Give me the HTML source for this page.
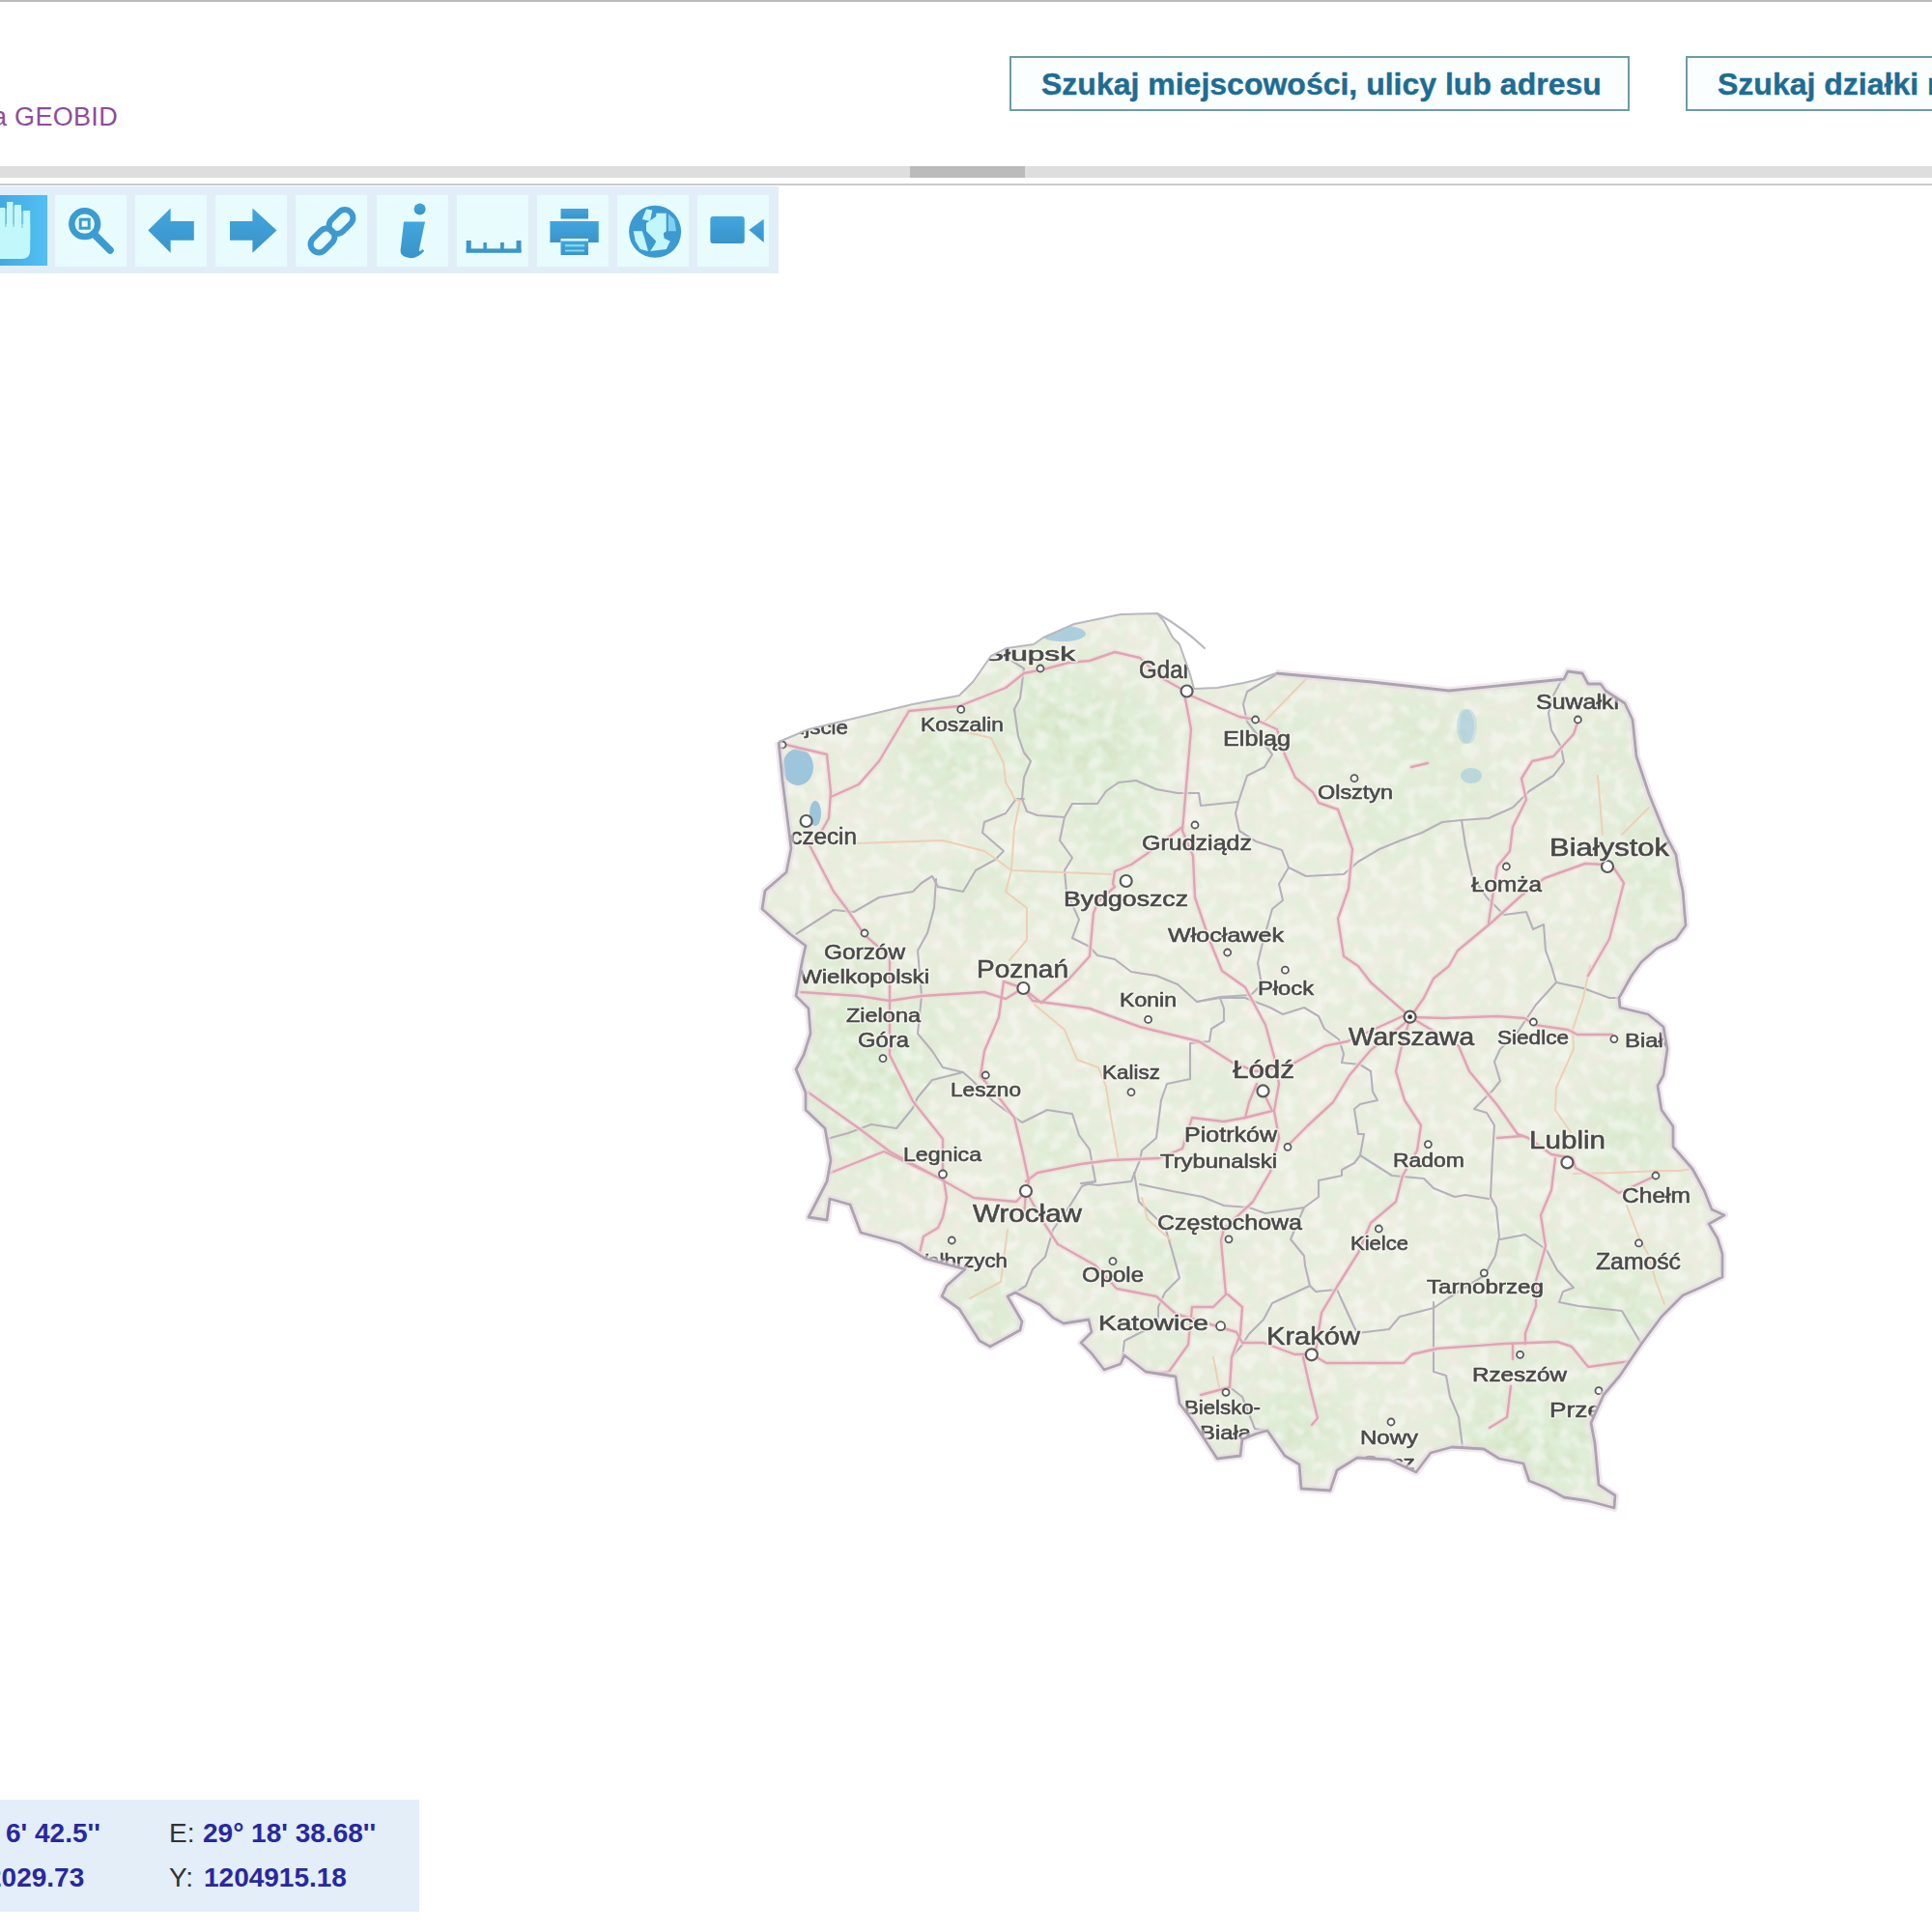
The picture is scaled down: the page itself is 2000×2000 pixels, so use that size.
<!DOCTYPE html>
<html><head><meta charset="utf-8">
<style>
html,body{margin:0;padding:0;background:#fff;width:2000px;height:2000px;overflow:hidden;position:relative;font-family:"Liberation Sans",sans-serif;}
.abs{position:absolute;}
#topline{left:0;top:0;width:2000px;height:2px;background:#bababa;}
#geobid{left:-8px;top:106px;font-size:27px;letter-spacing:0.3px;color:#8b4d9b;white-space:nowrap;}
#track{left:0;top:172px;width:2000px;height:12px;background:#dedede;}
#thumb{left:942px;top:172px;width:119px;height:12px;background:#bbbbbb;}
#sep{left:0;top:190px;width:2000px;height:2px;background:#cbcbcb;}
#toolbar{left:0;top:193px;width:806px;height:90px;background:#e1eef8;}
.btn{position:absolute;top:202px;width:74px;height:74px;background:#e6fbfd;}
.btn svg{position:absolute;left:0;top:0;}
.sbtn{position:absolute;top:58px;height:53px;border:2px solid #6b9ca8;background:#fbfefe;color:#1e6c93;font-weight:bold;font-size:32px;-webkit-text-stroke:0.4px #1e6c93;white-space:nowrap;overflow:hidden;}
.sbtn span{position:absolute;top:9px;}
#coords{left:0;top:1863px;width:434px;height:116px;background:#e3eef8;}
.cl{position:absolute;font-size:28px;color:#333;white-space:nowrap;}
.cv{position:absolute;font-size:28px;color:#2828a0;font-weight:bold;white-space:nowrap;}
</style></head>
<body>
<div id="topline" class="abs"></div>
<div id="geobid" class="abs">a GEOBID</div>
<div class="sbtn" style="left:1045px;width:638px;"><span style="left:31px;">Szukaj miejscowości, ulicy lub adresu</span></div>
<div class="sbtn" style="left:1745px;width:400px;"><span style="left:31px;">Szukaj działki nr</span></div>
<div id="track" class="abs"></div>
<div id="thumb" class="abs"></div>
<div id="sep" class="abs"></div>
<div id="toolbar" class="abs"></div>
<svg class="abs" style="left:0;top:0;" width="820" height="300" viewBox="0 0 820 300">
<defs>
<linearGradient id="hg" x1="0" y1="0" x2="1" y2="0"><stop offset="0" stop-color="#3a9fd6"/><stop offset="1" stop-color="#52bff2"/></linearGradient>
<linearGradient id="ig" x1="0" y1="0" x2="0" y2="1"><stop offset="0" stop-color="#42a6de"/><stop offset="1" stop-color="#3a93c8"/></linearGradient>
</defs>
<g fill="#e8fbfd">
<rect x="57" y="202" width="74" height="74"/>
<rect x="140" y="202" width="74" height="74"/>
<rect x="223" y="202" width="74" height="74"/>
<rect x="306" y="202" width="74" height="74"/>
<rect x="390" y="202" width="74" height="74"/>
<rect x="473" y="202" width="74" height="74"/>
<rect x="556" y="202" width="74" height="74"/>
<rect x="639" y="202" width="74" height="74"/>
<rect x="722" y="202" width="74" height="74"/>
</g>
<!-- hand -->
<rect x="-26" y="202" width="75" height="73" fill="url(#hg)"/>
<g fill="#c2f8fb">
<rect x="-2" y="215" width="7" height="30"/>
<rect x="7" y="209" width="6.5" height="30"/>
<rect x="15" y="212" width="7" height="30"/>
<rect x="24.2" y="218" width="7" height="30"/>
<path d="M-2 232 H31.2 V259 Q31.2 268 22 268 H-2 Z"/>
</g>
<g stroke="#8fd0dc" stroke-width="1.5"><line x1="5.8" y1="216" x2="5.8" y2="235"/><line x1="14" y1="213" x2="14" y2="235"/><line x1="23" y1="219" x2="23" y2="236"/></g>
<!-- magnifier -->
<g fill="none" stroke="#3b9ccf">
<circle cx="87.7" cy="231.7" r="13.4" stroke-width="6.5"/>
<rect x="83.2" y="227.2" width="9" height="9" stroke-width="3"/>
<line x1="97" y1="242" x2="114" y2="259" stroke-width="7.5" stroke-linecap="round"/>
</g>
<!-- arrows -->
<path fill="url(#ig)" d="M153.3 238.4 L176.6 215.6 V229 H200.8 V248.7 H176.6 V261.7 Z"/>
<path fill="url(#ig)" d="M286.5 238.4 L261.4 215.6 V229 H238 V248.7 H261.4 V261.7 Z"/>
<!-- link -->
<g fill="none" stroke="#3d9ad0" stroke-width="6">
<rect x="-14" y="-8.5" width="28" height="17" rx="8.5" transform="translate(353 229.5) rotate(-45)"/>
<rect x="-14" y="-8.5" width="28" height="17" rx="8.5" transform="translate(334 249) rotate(-45)"/>
</g>
<!-- info -->
<g fill="url(#ig)">
<circle cx="434.6" cy="216.4" r="6"/>
<path d="M418 229.5 H440 L434 258 Q433 262 438 258 L439 260 Q430 270 420 266 Q413 264 415 256 Z"/>
</g>
<!-- ruler -->
<g fill="#3c96c8">
<rect x="482.7" y="257.4" width="56.8" height="4.4"/>
<rect x="482.7" y="249" width="5" height="12"/>
<rect x="500.4" y="251" width="3.4" height="10"/>
<rect x="518" y="251" width="3.8" height="10"/>
<rect x="534.5" y="249" width="5" height="12"/>
</g>
<!-- printer -->
<g fill="url(#ig)">
<rect x="580.5" y="216" width="28.5" height="10.5"/>
<path d="M569.4 229 H619.7 V251 H609 V247 H580.5 V251 H569.4 Z"/>
<path d="M580.5 249.5 H609 V264 H580.5 Z"/>
</g>
<g fill="#7fd8f0"><rect x="585" y="253" width="20" height="2.4"/><rect x="585" y="258.5" width="20" height="2"/></g>
<!-- globe -->
<circle cx="678.1" cy="239.8" r="27" fill="#3d9ad0"/>
<g fill="#c2f6fb">
<path d="M679.3 220.7 L689.7 220.7 L689.7 239.3 L686.8 241.4 L687.6 246.8 L693.8 249.7 L689.7 258 L673.1 260 L677.3 253.8 L679.3 249.7 L675.2 245.5 L669 239.3 L669 231 L675.2 226.9 L679.3 224 Z"/>
<path d="M655.7 239.3 L664.8 239.3 L666.9 245.5 L671 260 L662.8 258 L657.8 249.7 Z"/>
<path d="M669 216.6 L675.2 217.4 L673.1 229 L664.8 226.9 Z"/>
</g>
<path d="M691.8 221.5 L698 226.9 L700 239.3 L691.8 239.3 Z" fill="#7fd0f0"/>
<!-- video -->
<rect x="735.3" y="223.9" width="35.4" height="28" rx="3" fill="url(#ig)"/>
<path d="M775.3 237.9 L790.7 226.7 V250.9 Z" fill="url(#ig)"/>
</svg>

<!-- MAP -->
<svg class="abs" style="left:0;top:0;" width="2000" height="2000" viewBox="0 0 2000 2000">
<defs><clipPath id="pl"><polygon points="806,768 837,755 891,742 945,729 993,720 1007,706 1026,679 1042,671 1070,667 1080,660 1112,646 1160,636 1198,635 1205,643 1214,660 1221,667 1232,698 1236,713 1260,712 1287,707 1300,704 1321,697 1420,706 1500,715 1570,708 1619,703 1623,695 1638,697 1644,708 1657,708 1662,715 1682,728 1690,745 1694,783 1707,822 1724,864 1735,885 1738,905 1742,922 1745,958 1735,972 1715,982 1699,996 1689,1010 1676,1033 1677,1043 1706,1050 1722,1063 1726,1086 1722,1113 1716,1124 1720,1149 1732,1166 1732,1187 1752,1210 1764,1232 1772,1252 1785,1258 1769,1267 1778,1282 1783,1298 1783,1322 1760,1333 1742,1341 1720,1363 1700,1390 1677,1424 1660,1444 1647,1473 1651,1494 1655,1537 1672,1548 1671,1561 1645,1554 1619,1550 1603,1541 1583,1533 1577,1515 1552,1510 1536,1500 1503,1498 1481,1504 1466,1524 1438,1511 1405,1509 1384,1522 1377,1543 1347,1541 1345,1516 1330,1507 1312,1481 1301,1484 1286,1490 1284,1507 1260,1510 1243,1484 1234,1470 1221,1453 1217,1425 1186,1420 1164,1403 1160,1412 1143,1418 1130,1401 1119,1390 1130,1379 1127,1366 1101,1370 1090,1364 1077,1351 1051,1338 1043,1342 1058,1368 1056,1377 1025,1394 1014,1388 993,1355 975,1342 980,1331 999,1314 958,1303 932,1287 891,1276 880,1247 859,1241 856,1263 837,1260 856,1223 860,1201 854,1168 834,1149 834,1131 824,1107 832,1092 839,1070 837,1044 824,1031 830,997 834,979 818,967 789,941 792,922 814,903 819,878 817,862 810,808"/></clipPath>
<filter id="bl" x="-20%" y="-20%" width="140%" height="140%"><feGaussianBlur stdDeviation="25"/></filter>
<filter id="b1"><feGaussianBlur stdDeviation="0.7"/></filter>
</defs>
<polygon points="806,768 837,755 891,742 945,729 993,720 1007,706 1026,679 1042,671 1070,667 1080,660 1112,646 1160,636 1198,635 1205,643 1214,660 1221,667 1232,698 1236,713 1260,712 1287,707 1300,704 1321,697 1420,706 1500,715 1570,708 1619,703 1623,695 1638,697 1644,708 1657,708 1662,715 1682,728 1690,745 1694,783 1707,822 1724,864 1735,885 1738,905 1742,922 1745,958 1735,972 1715,982 1699,996 1689,1010 1676,1033 1677,1043 1706,1050 1722,1063 1726,1086 1722,1113 1716,1124 1720,1149 1732,1166 1732,1187 1752,1210 1764,1232 1772,1252 1785,1258 1769,1267 1778,1282 1783,1298 1783,1322 1760,1333 1742,1341 1720,1363 1700,1390 1677,1424 1660,1444 1647,1473 1651,1494 1655,1537 1672,1548 1671,1561 1645,1554 1619,1550 1603,1541 1583,1533 1577,1515 1552,1510 1536,1500 1503,1498 1481,1504 1466,1524 1438,1511 1405,1509 1384,1522 1377,1543 1347,1541 1345,1516 1330,1507 1312,1481 1301,1484 1286,1490 1284,1507 1260,1510 1243,1484 1234,1470 1221,1453 1217,1425 1186,1420 1164,1403 1160,1412 1143,1418 1130,1401 1119,1390 1130,1379 1127,1366 1101,1370 1090,1364 1077,1351 1051,1338 1043,1342 1058,1368 1056,1377 1025,1394 1014,1388 993,1355 975,1342 980,1331 999,1314 958,1303 932,1287 891,1276 880,1247 859,1241 856,1263 837,1260 856,1223 860,1201 854,1168 834,1149 834,1131 824,1107 832,1092 839,1070 837,1044 824,1031 830,997 834,979 818,967 789,941 792,922 814,903 819,878 817,862 810,808" fill="#efede2"/>
<g clip-path="url(#pl)">
<filter id="tex" x="760" y="600" width="1060" height="1000" filterUnits="userSpaceOnUse"><feTurbulence type="fractalNoise" baseFrequency="0.055" numOctaves="3" seed="11"/><feColorMatrix type="matrix" values="0 0 0 0 0.72 0 0 0 0 0.85 0 0 0 0 0.67 9 0 0 0 -3.7"/><feGaussianBlur stdDeviation="1.6"/></filter>
<filter id="tex2" x="760" y="600" width="1060" height="1000" filterUnits="userSpaceOnUse"><feTurbulence type="fractalNoise" baseFrequency="0.09" numOctaves="2" seed="5"/><feColorMatrix type="matrix" values="0 0 0 0 0.76 0 0 0 0 0.87 0 0 0 0 0.71 7 0 0 0 -3.2"/><feGaussianBlur stdDeviation="1.5"/></filter>
<filter id="tex3" x="760" y="600" width="1060" height="1000" filterUnits="userSpaceOnUse"><feTurbulence type="fractalNoise" baseFrequency="0.07" numOctaves="2" seed="23"/><feColorMatrix type="matrix" values="0 0 0 0 0.97 0 0 0 0 0.96 0 0 0 0 0.94 6 0 0 0 -3.0"/><feGaussianBlur stdDeviation="1.8"/></filter>
<mask id="gm" maskUnits="userSpaceOnUse" x="760" y="600" width="1060" height="1000"><rect x="760" y="600" width="1060" height="1000" fill="#555"/><g filter="url(#bl)" fill="#fff"><ellipse cx="1126" cy="765" rx="80" ry="50"/><ellipse cx="984" cy="780" rx="50" ry="40"/><ellipse cx="895" cy="1100" rx="60" ry="70"/><ellipse cx="892" cy="1185" rx="35" ry="18"/><ellipse cx="981" cy="1050" rx="20" ry="20"/><ellipse cx="1088" cy="1180" rx="30" ry="25"/><ellipse cx="1428" cy="853" rx="35" ry="22"/><ellipse cx="1505" cy="828" rx="35" ry="20"/><ellipse cx="1560" cy="742" rx="12" ry="10"/><ellipse cx="1665" cy="776" rx="20" ry="25"/><ellipse cx="1622" cy="822" rx="15" ry="17"/><ellipse cx="1517" cy="826" rx="18" ry="22"/><ellipse cx="1722" cy="951" rx="18" ry="22"/><ellipse cx="1685" cy="1170" rx="40" ry="40"/><ellipse cx="1668" cy="1016" rx="12" ry="17"/><ellipse cx="1425" cy="1038" rx="28" ry="12"/><ellipse cx="1430" cy="1211" rx="22" ry="24"/><ellipse cx="1256" cy="1137" rx="26" ry="15"/><ellipse cx="1232" cy="1316" rx="32" ry="22"/><ellipse cx="1205" cy="1392" rx="28" ry="13"/><ellipse cx="1020" cy="1362" rx="38" ry="30"/><ellipse cx="1165" cy="1285" rx="35" ry="20"/><ellipse cx="1338" cy="1478" rx="42" ry="44"/><ellipse cx="1548" cy="1366" rx="30" ry="25"/><ellipse cx="1585" cy="1296" rx="28" ry="20"/><ellipse cx="1672" cy="1358" rx="48" ry="44"/><ellipse cx="1585" cy="1497" rx="80" ry="60"/><ellipse cx="1383" cy="1487" rx="22" ry="10"/><ellipse cx="1150" cy="860" rx="40" ry="30"/><ellipse cx="1020" cy="920" rx="40" ry="18"/><ellipse cx="1080" cy="720" rx="40" ry="30"/><ellipse cx="1700" cy="880" rx="25" ry="60"/><ellipse cx="870" cy="1000" rx="30" ry="30"/><ellipse cx="1330" cy="760" rx="30" ry="25"/><ellipse cx="1470" cy="760" rx="40" ry="25"/></g></mask>
<g filter="url(#bl)" fill="#cde2bd" opacity="0.75"><ellipse cx="1126" cy="765" rx="80" ry="50"/><ellipse cx="984" cy="780" rx="50" ry="40"/><ellipse cx="895" cy="1100" rx="60" ry="70"/><ellipse cx="892" cy="1185" rx="35" ry="18"/><ellipse cx="981" cy="1050" rx="20" ry="20"/><ellipse cx="1088" cy="1180" rx="30" ry="25"/><ellipse cx="1428" cy="853" rx="35" ry="22"/><ellipse cx="1505" cy="828" rx="35" ry="20"/><ellipse cx="1560" cy="742" rx="12" ry="10"/><ellipse cx="1665" cy="776" rx="20" ry="25"/><ellipse cx="1622" cy="822" rx="15" ry="17"/><ellipse cx="1517" cy="826" rx="18" ry="22"/><ellipse cx="1722" cy="951" rx="18" ry="22"/><ellipse cx="1685" cy="1170" rx="40" ry="40"/><ellipse cx="1668" cy="1016" rx="12" ry="17"/><ellipse cx="1425" cy="1038" rx="28" ry="12"/><ellipse cx="1430" cy="1211" rx="22" ry="24"/><ellipse cx="1256" cy="1137" rx="26" ry="15"/><ellipse cx="1232" cy="1316" rx="32" ry="22"/><ellipse cx="1205" cy="1392" rx="28" ry="13"/><ellipse cx="1020" cy="1362" rx="38" ry="30"/><ellipse cx="1165" cy="1285" rx="35" ry="20"/><ellipse cx="1338" cy="1478" rx="42" ry="44"/><ellipse cx="1548" cy="1366" rx="30" ry="25"/><ellipse cx="1585" cy="1296" rx="28" ry="20"/><ellipse cx="1672" cy="1358" rx="48" ry="44"/><ellipse cx="1585" cy="1497" rx="80" ry="60"/><ellipse cx="1383" cy="1487" rx="22" ry="10"/><ellipse cx="1150" cy="860" rx="40" ry="30"/><ellipse cx="1020" cy="920" rx="40" ry="18"/><ellipse cx="1080" cy="720" rx="40" ry="30"/><ellipse cx="1700" cy="880" rx="25" ry="60"/><ellipse cx="870" cy="1000" rx="30" ry="30"/><ellipse cx="1330" cy="760" rx="30" ry="25"/><ellipse cx="1470" cy="760" rx="40" ry="25"/></g>
<g mask="url(#gm)"><rect x="760" y="600" width="1060" height="1000" filter="url(#tex)"/></g>
<rect x="760" y="600" width="1060" height="1000" filter="url(#tex2)" opacity="0.5"/>
<rect x="760" y="600" width="1060" height="1000" filter="url(#tex3)" opacity="0.45"/>
<g fill="#9dc5dc" filter="url(#b1)"><ellipse cx="826" cy="794" rx="16" ry="19"/><ellipse cx="844" cy="842" rx="6" ry="13"/><ellipse cx="1100" cy="656" rx="24" ry="8" opacity="0.8"/><ellipse cx="1517" cy="752" rx="9" ry="18" opacity="0.45"/><ellipse cx="1523" cy="803" rx="11" ry="8" opacity="0.55"/><ellipse cx="1520" cy="752" rx="9" ry="18" opacity="0.35"/></g>
<g fill="none" stroke-linejoin="round" stroke-linecap="round" filter="url(#b1)">
<polyline points="1036,677 1060,692 1056,723 1050,734 1054,762 1060,779 1067,788 1060,805 1058,827 1063,840 1074,844 1102,846" stroke="#b6b0bb" stroke-width="2.1"/>
<polyline points="1102,846 1110,832 1136,832 1145,819 1158,810 1176,808 1197,817 1219,821 1241,821 1243,834 1282,830 1279,842 1283,860 1300,871 1327,880 1334,898 1352,907 1391,905 1406,892 1428,879 1450,870 1472,862 1493,851 1513,849 1541,847 1566,836 1583,819 1608,803 1619,789 1616,773 1606,756 1603,738 1608,720 1617,703" stroke="#b6b0bb" stroke-width="2.1"/>
<polyline points="1320,699 1291,716 1287,729 1291,747 1317,781 1309,794 1291,803 1282,830" stroke="#b6b0bb" stroke-width="2.1"/>
<polyline points="1102,846 1097,870 1110,888 1102,901 1104,923 1117,952 1110,971 1128,980 1136,989 1154,993 1171,1006 1197,1010 1219,1019 1239,1037 1263,1032 1295,1030 1306,1019 1302,997 1306,980 1317,941 1328,932 1324,915 1334,898" stroke="#b6b0bb" stroke-width="2.1"/>
<polyline points="1060,827 1052,827 1041,842 1019,851 1017,862 1039,881 1030,890 1010,901 997,923 971,918 965,907 954,914 945,923 910,929 884,944 863,942 824,967" stroke="#b6b0bb" stroke-width="2.1"/>
<polyline points="969,910 967,940 960,966 950,984 954,1031 950,1070 965,1088 976,1105 997,1110 1006,1118 1019,1131 1028,1140 1058,1162 1084,1149 1110,1153 1117,1175 1128,1190 1134,1223" stroke="#b6b0bb" stroke-width="2.1"/>
<polyline points="997,1110 965,1118 950,1136 945,1147 928,1168 902,1164 878,1173 856,1179" stroke="#b6b0bb" stroke-width="2.1"/>
<polyline points="1239,1037 1263,1033 1267,1044 1267,1057 1254,1065 1252,1078 1232,1080 1232,1117 1208,1122 1202,1139 1197,1178 1182,1191 1180,1201 1171,1223 1137,1227 1119,1225 1134,1223" stroke="#b6b0bb" stroke-width="2.1"/>
<polyline points="1134,1223 1120,1228 1107,1249 1090,1273 1082,1301 1069,1314 1062,1331 1051,1338" stroke="#b6b0bb" stroke-width="2.1"/>
<polyline points="1174,1214 1179,1244 1206,1270 1214,1297 1221,1323 1206,1338 1199,1353 1199,1370 1164,1388 1162,1405" stroke="#b6b0bb" stroke-width="2.1"/>
<polyline points="1180,1226 1213,1233 1245,1239 1267,1248 1293,1250 1310,1256 1350,1250 1365,1239 1365,1222 1389,1217 1389,1211 1402,1204 1408,1196 1412,1174 1406,1174 1402,1148 1408,1143 1426,1139 1421,1130 1419,1109 1408,1102 1389,1100 1391,1091 1386,1076 1371,1065 1365,1052 1350,1043 1328,1050 1315,1043 1289,1033 1263,1033" stroke="#b6b0bb" stroke-width="2.1"/>
<polyline points="1350,1250 1336,1283 1350,1300 1351,1310 1356,1331 1317,1349 1308,1366 1293,1381 1286,1392 1275,1405 1273,1436 1286,1446 1299,1479 1312,1481" stroke="#b6b0bb" stroke-width="2.1"/>
<polyline points="1408,1196 1441,1217 1474,1220 1484,1230 1506,1239 1517,1237 1541,1241" stroke="#b6b0bb" stroke-width="2.1"/>
<polyline points="1356,1331 1362,1337 1384,1335 1401,1372 1405,1380 1438,1376 1449,1363 1484,1354 1499,1344 1537,1320" stroke="#b6b0bb" stroke-width="2.1"/>
<polyline points="1484,1348 1484,1420 1497,1424 1501,1446 1510,1467 1514,1498" stroke="#b6b0bb" stroke-width="2.1"/>
<polyline points="1611,1017 1590,1040 1570,1070 1553,1086 1547,1099 1553,1119 1545,1129 1526,1148 1539,1152 1547,1165 1545,1196 1543,1239 1549,1250 1552,1280 1548,1300 1537,1320" stroke="#b6b0bb" stroke-width="2.1"/>
<polyline points="1513,849 1517,875 1524,907 1539,929 1557,947 1580,944 1587,962 1598,957 1600,984 1606,1000 1611,1017 1639,1023 1666,1033 1676,1033" stroke="#b6b0bb" stroke-width="2.1"/>
<polyline points="1553,1283 1579,1278 1601,1294 1612,1315 1629,1333 1618,1337 1614,1348 1634,1352 1679,1357 1699,1391" stroke="#b6b0bb" stroke-width="2.1"/>
<polyline points="887,873 976,870 1019,881 1032,890 1047,901 1150,905" stroke="#edcfb8" stroke-width="2"/>
<polyline points="997,757 1026,764 1039,790 1041,810 1047,820 1050,827 1056,829 1050,857 1047,901 1041,923 1063,940 1063,973 1045,994" stroke="#edcfb8" stroke-width="2"/>
<polyline points="1309,747 1352,703" stroke="#edcfb8" stroke-width="2"/>
<polyline points="1679,864 1707,836" stroke="#edcfb8" stroke-width="2"/>
<polyline points="1654,803 1659,864" stroke="#edcfb8" stroke-width="2"/>
<polyline points="1646,1000 1639,1033 1628,1066 1629,1086 1611,1126 1610,1149 1626,1172" stroke="#edcfb8" stroke-width="2"/>
<polyline points="1629,1215 1673,1214 1716,1212 1739,1212 1752,1210" stroke="#edcfb8" stroke-width="2"/>
<polyline points="1684,1248 1697,1282 1706,1298 1714,1326 1723,1350" stroke="#edcfb8" stroke-width="2"/>
<polyline points="1071,1040 1102,1066 1115,1097 1137,1105 1145,1125 1150,1157 1158,1201" stroke="#edcfb8" stroke-width="2"/>
<polyline points="1043,1273 1036,1327 1004,1344" stroke="#edcfb8" stroke-width="2"/>
<polyline points="1182,1240 1188,1262 1212,1284" stroke="#edcfb8" stroke-width="2"/>
<polyline points="1256,1405 1262,1436" stroke="#edcfb8" stroke-width="2"/>
<polyline points="810,770 856,781 860,820 858,847 845,870 837,873" stroke="#f2d8dc" stroke-width="5.5" opacity="0.7"/>
<polyline points="860,825 889,812 910,788 941,736 993,731 1041,712 1060,697 1084,692 1106,686 1128,684 1154,675 1180,681 1201,701 1228,716" stroke="#f2d8dc" stroke-width="5.5" opacity="0.7"/>
<polyline points="837,873 863,923 876,940 895,968 921,990 921,1092 932,1114 945,1140 976,1179 976,1215 980,1240 976,1260 971,1271 956,1280 952,1297" stroke="#f2d8dc" stroke-width="5.5" opacity="0.7"/>
<polyline points="828,1027 889,1031 921,1036 954,1031 1019,1027 1041,1034 1059,1023 1069,1036 1128,1044 1180,1063 1241,1078 1276,1100 1300,1109 1337,1102 1371,1083 1395,1078 1452,1052 1460,1053 1495,1054 1550,1052 1578,1054 1589,1061 1623,1066 1633,1071 1669,1071" stroke="#f2d8dc" stroke-width="5.5" opacity="0.7"/>
<polyline points="1059,1023 1039,1016 1034,1053 1019,1088 1015,1114 1034,1136 1050,1157 1058,1190 1065,1223 1062,1233 1060,1260" stroke="#f2d8dc" stroke-width="5.5" opacity="0.7"/>
<polyline points="1059,1023 1078,1038 1106,1014 1128,990 1132,945 1137,933 1154,918 1152,915 1154,902 1171,895 1187,884 1224,856" stroke="#f2d8dc" stroke-width="5.5" opacity="0.7"/>
<polyline points="837,1131 889,1168 921,1192 969,1218 1008,1240 1052,1244 1062,1233 1080,1265 1095,1288 1134,1310 1156,1334 1197,1342 1217,1360 1260,1373 1280,1379 1286,1390 1308,1390 1340,1402 1358,1402 1373,1411 1453,1411 1462,1402 1488,1396 1557,1391 1612,1389 1627,1394 1644,1415 1688,1409" stroke="#f2d8dc" stroke-width="5.5" opacity="0.7"/>
<polyline points="860,1214 915,1192 969,1218" stroke="#f2d8dc" stroke-width="5.5" opacity="0.7"/>
<polyline points="1062,1223 1074,1214 1119,1205 1150,1201 1200,1199 1224,1189 1234,1157 1267,1161 1289,1157 1317,1150 1307,1129" stroke="#f2d8dc" stroke-width="5.5" opacity="0.7"/>
<polyline points="1226,718 1233,755 1224,860 1235,886 1237,929 1252,973 1265,1005 1289,1022 1310,1061 1319,1094 1324,1122 1319,1150 1324,1178 1315,1213 1297,1244 1267,1272 1264,1284 1269,1340 1256,1353 1234,1353 1230,1392 1210,1420 1190,1423" stroke="#f2d8dc" stroke-width="5.5" opacity="0.7"/>
<polyline points="1271,1340 1286,1353 1284,1381 1275,1405 1273,1436 1243,1444" stroke="#f2d8dc" stroke-width="5.5" opacity="0.7"/>
<polyline points="1228,718 1283,742 1300,745 1322,755 1330,781 1341,805 1359,820 1365,831 1385,838 1400,879 1396,920 1385,951 1391,990 1406,1000 1419,1017 1450,1044 1460,1053" stroke="#f2d8dc" stroke-width="5.5" opacity="0.7"/>
<polyline points="1460,1053 1474,1033 1484,1013 1500,1000 1509,984 1544,955 1575,927 1599,909 1641,894 1662,895" stroke="#f2d8dc" stroke-width="5.5" opacity="0.7"/>
<polyline points="1634,745 1629,760 1608,783 1586,788 1575,806 1580,828 1566,856 1563,881 1550,897 1541,955" stroke="#f2d8dc" stroke-width="5.5" opacity="0.7"/>
<polyline points="1671,899 1681,914 1666,972 1644,1010" stroke="#f2d8dc" stroke-width="5.5" opacity="0.7"/>
<polyline points="1332,1187 1354,1165 1380,1141 1397,1113 1419,1087 1452,1061 1460,1053" stroke="#f2d8dc" stroke-width="5.5" opacity="0.7"/>
<polyline points="1460,1053 1450,1087 1445,1109 1454,1139 1471,1165 1467,1191 1452,1217 1445,1244 1419,1266 1406,1297 1384,1332 1368,1359 1362,1398" stroke="#f2d8dc" stroke-width="5.5" opacity="0.7"/>
<polyline points="1460,1053 1510,1083 1521,1109 1550,1144 1571,1174 1582,1178 1606,1195 1628,1199 1631,1209 1656,1222 1676,1235 1714,1217" stroke="#f2d8dc" stroke-width="5.5" opacity="0.7"/>
<polyline points="1550,1178 1576,1176" stroke="#f2d8dc" stroke-width="5.5" opacity="0.7"/>
<polyline points="1610,1199 1606,1232 1595,1258 1600,1290 1590,1326 1590,1352 1579,1380 1579,1391" stroke="#f2d8dc" stroke-width="5.5" opacity="0.7"/>
<polyline points="1349,1405 1356,1436 1364,1468 1358,1475" stroke="#f2d8dc" stroke-width="5.5" opacity="0.7"/>
<polyline points="1564,1435 1560,1467 1542,1478" stroke="#f2d8dc" stroke-width="5.5" opacity="0.7"/>
<polyline points="1566,1391 1566,1407" stroke="#f2d8dc" stroke-width="5.5" opacity="0.7"/>
<polyline points="1461,794 1478,790" stroke="#f2d8dc" stroke-width="5.5" opacity="0.7"/>
<polyline points="1301,1122 1293,1141 1289,1157" stroke="#f2d8dc" stroke-width="5.5" opacity="0.7"/>
<polyline points="810,770 856,781 860,820 858,847 845,870 837,873" stroke="#dca6b3" stroke-width="2.4"/>
<polyline points="860,825 889,812 910,788 941,736 993,731 1041,712 1060,697 1084,692 1106,686 1128,684 1154,675 1180,681 1201,701 1228,716" stroke="#dca6b3" stroke-width="2.4"/>
<polyline points="837,873 863,923 876,940 895,968 921,990 921,1092 932,1114 945,1140 976,1179 976,1215 980,1240 976,1260 971,1271 956,1280 952,1297" stroke="#dca6b3" stroke-width="2.4"/>
<polyline points="828,1027 889,1031 921,1036 954,1031 1019,1027 1041,1034 1059,1023 1069,1036 1128,1044 1180,1063 1241,1078 1276,1100 1300,1109 1337,1102 1371,1083 1395,1078 1452,1052 1460,1053 1495,1054 1550,1052 1578,1054 1589,1061 1623,1066 1633,1071 1669,1071" stroke="#dca6b3" stroke-width="2.4"/>
<polyline points="1059,1023 1039,1016 1034,1053 1019,1088 1015,1114 1034,1136 1050,1157 1058,1190 1065,1223 1062,1233 1060,1260" stroke="#dca6b3" stroke-width="2.4"/>
<polyline points="1059,1023 1078,1038 1106,1014 1128,990 1132,945 1137,933 1154,918 1152,915 1154,902 1171,895 1187,884 1224,856" stroke="#dca6b3" stroke-width="2.4"/>
<polyline points="837,1131 889,1168 921,1192 969,1218 1008,1240 1052,1244 1062,1233 1080,1265 1095,1288 1134,1310 1156,1334 1197,1342 1217,1360 1260,1373 1280,1379 1286,1390 1308,1390 1340,1402 1358,1402 1373,1411 1453,1411 1462,1402 1488,1396 1557,1391 1612,1389 1627,1394 1644,1415 1688,1409" stroke="#dca6b3" stroke-width="2.4"/>
<polyline points="860,1214 915,1192 969,1218" stroke="#dca6b3" stroke-width="2.4"/>
<polyline points="1062,1223 1074,1214 1119,1205 1150,1201 1200,1199 1224,1189 1234,1157 1267,1161 1289,1157 1317,1150 1307,1129" stroke="#dca6b3" stroke-width="2.4"/>
<polyline points="1226,718 1233,755 1224,860 1235,886 1237,929 1252,973 1265,1005 1289,1022 1310,1061 1319,1094 1324,1122 1319,1150 1324,1178 1315,1213 1297,1244 1267,1272 1264,1284 1269,1340 1256,1353 1234,1353 1230,1392 1210,1420 1190,1423" stroke="#dca6b3" stroke-width="2.4"/>
<polyline points="1271,1340 1286,1353 1284,1381 1275,1405 1273,1436 1243,1444" stroke="#dca6b3" stroke-width="2.4"/>
<polyline points="1228,718 1283,742 1300,745 1322,755 1330,781 1341,805 1359,820 1365,831 1385,838 1400,879 1396,920 1385,951 1391,990 1406,1000 1419,1017 1450,1044 1460,1053" stroke="#dca6b3" stroke-width="2.4"/>
<polyline points="1460,1053 1474,1033 1484,1013 1500,1000 1509,984 1544,955 1575,927 1599,909 1641,894 1662,895" stroke="#dca6b3" stroke-width="2.4"/>
<polyline points="1634,745 1629,760 1608,783 1586,788 1575,806 1580,828 1566,856 1563,881 1550,897 1541,955" stroke="#dca6b3" stroke-width="2.4"/>
<polyline points="1671,899 1681,914 1666,972 1644,1010" stroke="#dca6b3" stroke-width="2.4"/>
<polyline points="1332,1187 1354,1165 1380,1141 1397,1113 1419,1087 1452,1061 1460,1053" stroke="#dca6b3" stroke-width="2.4"/>
<polyline points="1460,1053 1450,1087 1445,1109 1454,1139 1471,1165 1467,1191 1452,1217 1445,1244 1419,1266 1406,1297 1384,1332 1368,1359 1362,1398" stroke="#dca6b3" stroke-width="2.4"/>
<polyline points="1460,1053 1510,1083 1521,1109 1550,1144 1571,1174 1582,1178 1606,1195 1628,1199 1631,1209 1656,1222 1676,1235 1714,1217" stroke="#dca6b3" stroke-width="2.4"/>
<polyline points="1550,1178 1576,1176" stroke="#dca6b3" stroke-width="2.4"/>
<polyline points="1610,1199 1606,1232 1595,1258 1600,1290 1590,1326 1590,1352 1579,1380 1579,1391" stroke="#dca6b3" stroke-width="2.4"/>
<polyline points="1349,1405 1356,1436 1364,1468 1358,1475" stroke="#dca6b3" stroke-width="2.4"/>
<polyline points="1564,1435 1560,1467 1542,1478" stroke="#dca6b3" stroke-width="2.4"/>
<polyline points="1566,1391 1566,1407" stroke="#dca6b3" stroke-width="2.4"/>
<polyline points="1461,794 1478,790" stroke="#dca6b3" stroke-width="2.4"/>
<polyline points="1301,1122 1293,1141 1289,1157" stroke="#dca6b3" stroke-width="2.4"/>
</g>
<g fill="#fff" stroke="#5a5a5a" filter="url(#b1)">
<circle cx="994.8" cy="734.4" r="3.5" stroke-width="1.8"/>
<circle cx="1077" cy="692" r="3.5" stroke-width="1.8"/>
<circle cx="810" cy="771" r="3.5" stroke-width="1.8"/>
<circle cx="834.6" cy="850" r="6" stroke-width="2.2"/>
<circle cx="1228.6" cy="715.5" r="6" stroke-width="2.2"/>
<circle cx="1299.6" cy="745" r="3.5" stroke-width="1.8"/>
<circle cx="1402" cy="805.7" r="3.5" stroke-width="1.8"/>
<circle cx="1633.4" cy="745" r="3.5" stroke-width="1.8"/>
<circle cx="1664" cy="897" r="6" stroke-width="2.2"/>
<circle cx="1559.4" cy="897" r="3.5" stroke-width="1.8"/>
<circle cx="1237" cy="854" r="3.5" stroke-width="1.8"/>
<circle cx="1165.7" cy="912" r="6" stroke-width="2.2"/>
<circle cx="895" cy="966" r="3.5" stroke-width="1.8"/>
<circle cx="1059.4" cy="1023" r="6" stroke-width="2.2"/>
<circle cx="1188.6" cy="1055.4" r="3.5" stroke-width="1.8"/>
<circle cx="914" cy="1095.7" r="3.5" stroke-width="1.8"/>
<circle cx="1020.3" cy="1113" r="3.5" stroke-width="1.8"/>
<circle cx="1171" cy="1130.7" r="3.5" stroke-width="1.8"/>
<circle cx="1307.5" cy="1129.4" r="6" stroke-width="2.2"/>
<circle cx="1333" cy="1187.3" r="3.5" stroke-width="1.8"/>
<circle cx="976" cy="1215.5" r="4" stroke-width="1.8"/>
<circle cx="1062" cy="1233" r="6" stroke-width="2.2"/>
<circle cx="985.3" cy="1284" r="3.5" stroke-width="1.8"/>
<circle cx="1152" cy="1305.7" r="3.5" stroke-width="1.8"/>
<circle cx="1263.6" cy="1372.7" r="4.5" stroke-width="1.8"/>
<circle cx="1357.8" cy="1402.3" r="6" stroke-width="2.2"/>
<circle cx="1269" cy="1441.3" r="3.5" stroke-width="1.8"/>
<circle cx="1440" cy="1472" r="3.5" stroke-width="1.8"/>
<circle cx="1330.4" cy="1004.2" r="3.5" stroke-width="1.8"/>
<circle cx="1459.6" cy="1052.7" r="6" stroke-width="2.2"/>
<circle cx="1587.4" cy="1058" r="3.5" stroke-width="1.8"/>
<circle cx="1670.9" cy="1075.6" r="3.5" stroke-width="1.8"/>
<circle cx="1622.4" cy="1203.4" r="6" stroke-width="2.2"/>
<circle cx="1478.4" cy="1184.6" r="3.5" stroke-width="1.8"/>
<circle cx="1714" cy="1217" r="3.5" stroke-width="1.8"/>
<circle cx="1427.3" cy="1272" r="3.5" stroke-width="1.8"/>
<circle cx="1696.5" cy="1286.9" r="3.5" stroke-width="1.8"/>
<circle cx="1536.3" cy="1317.8" r="3.5" stroke-width="1.8"/>
<circle cx="1573.6" cy="1402.3" r="3.5" stroke-width="1.8"/>
<circle cx="1655" cy="1439.7" r="3.5" stroke-width="1.8"/>
<circle cx="1270.7" cy="986" r="3.5" stroke-width="1.8"/>
<circle cx="1272" cy="1282.8" r="3.5" stroke-width="1.8"/>
<circle cx="1459.6" cy="1052.7" r="2.4" fill="#333" stroke="none"/>
</g>
<g font-family="Liberation Sans, sans-serif" fill="#f6f6f0" stroke="#f6f6f0" stroke-width="3.5" stroke-linejoin="round" opacity="0.85">
<text x="953" y="757" font-size="20.1" textLength="86" lengthAdjust="spacingAndGlyphs">Koszalin</text>
<text x="1018" y="684" font-size="20.8" textLength="95" lengthAdjust="spacingAndGlyphs">Słupsk</text>
<text x="760" y="760" font-size="20.8" textLength="118" lengthAdjust="spacingAndGlyphs">Świnoujście</text>
<text x="790" y="874" font-size="24.2" textLength="97" lengthAdjust="spacingAndGlyphs">Szczecin</text>
<text x="1179" y="702" font-size="26.4" textLength="83" lengthAdjust="spacingAndGlyphs">Gdańsk</text>
<text x="1182" y="880" font-size="22.2" textLength="114" lengthAdjust="spacingAndGlyphs">Grudziądz</text>
<text x="1101" y="938" font-size="22.2" textLength="129" lengthAdjust="spacingAndGlyphs">Bydgoszcz</text>
<text x="1209" y="975" font-size="20.8" textLength="120" lengthAdjust="spacingAndGlyphs">Włocławek</text>
<text x="853" y="993" font-size="22.2" textLength="84" lengthAdjust="spacingAndGlyphs">Gorzów</text>
<text x="828" y="1018" font-size="19.4" textLength="134" lengthAdjust="spacingAndGlyphs">Wielkopolski</text>
<text x="1266" y="772" font-size="21.5" textLength="70" lengthAdjust="spacingAndGlyphs">Elbląg</text>
<text x="1364" y="827" font-size="20.8" textLength="78" lengthAdjust="spacingAndGlyphs">Olsztyn</text>
<text x="1590" y="734" font-size="22.2" textLength="86" lengthAdjust="spacingAndGlyphs">Suwałki</text>
<text x="1604" y="886" font-size="26.4" textLength="124" lengthAdjust="spacingAndGlyphs">Białystok</text>
<text x="1523" y="923" font-size="22.2" textLength="73" lengthAdjust="spacingAndGlyphs">Łomża</text>
<text x="1011" y="1012" font-size="26.4" textLength="95" lengthAdjust="spacingAndGlyphs">Poznań</text>
<text x="1159" y="1042" font-size="19.4" textLength="59" lengthAdjust="spacingAndGlyphs">Konin</text>
<text x="876" y="1058" font-size="20.8" textLength="77" lengthAdjust="spacingAndGlyphs">Zielona</text>
<text x="888" y="1084" font-size="22.2" textLength="53" lengthAdjust="spacingAndGlyphs">Góra</text>
<text x="984" y="1135" font-size="20.8" textLength="73" lengthAdjust="spacingAndGlyphs">Leszno</text>
<text x="1141" y="1117" font-size="20.8" textLength="60" lengthAdjust="spacingAndGlyphs">Kalisz</text>
<text x="1276" y="1116" font-size="26.4" textLength="64" lengthAdjust="spacingAndGlyphs">Łódź</text>
<text x="1226" y="1182" font-size="22.2" textLength="96" lengthAdjust="spacingAndGlyphs">Piotrków</text>
<text x="1201" y="1209" font-size="20.8" textLength="121" lengthAdjust="spacingAndGlyphs">Trybunalski</text>
<text x="935" y="1202" font-size="20.8" textLength="81" lengthAdjust="spacingAndGlyphs">Legnica</text>
<text x="1007" y="1265" font-size="26.4" textLength="113" lengthAdjust="spacingAndGlyphs">Wrocław</text>
<text x="1198" y="1273" font-size="22.2" textLength="150" lengthAdjust="spacingAndGlyphs">Częstochowa</text>
<text x="940" y="1312" font-size="20.8" textLength="103" lengthAdjust="spacingAndGlyphs">Wałbrzych</text>
<text x="1120" y="1327" font-size="22.2" textLength="64" lengthAdjust="spacingAndGlyphs">Opole</text>
<text x="1137" y="1377" font-size="22.2" textLength="114" lengthAdjust="spacingAndGlyphs">Katowice</text>
<text x="1311" y="1392" font-size="26.4" textLength="97" lengthAdjust="spacingAndGlyphs">Kraków</text>
<text x="1226" y="1464" font-size="20.8" textLength="79" lengthAdjust="spacingAndGlyphs">Bielsko-</text>
<text x="1242" y="1490" font-size="20.8" textLength="53" lengthAdjust="spacingAndGlyphs">Biała</text>
<text x="1408" y="1495" font-size="20.8" textLength="60" lengthAdjust="spacingAndGlyphs">Nowy</text>
<text x="1410" y="1521" font-size="20.8" textLength="55" lengthAdjust="spacingAndGlyphs">Sącz</text>
<text x="1302" y="1030" font-size="20.8" textLength="58" lengthAdjust="spacingAndGlyphs">Płock</text>
<text x="1396" y="1082" font-size="25.0" textLength="130" lengthAdjust="spacingAndGlyphs">Warszawa</text>
<text x="1550" y="1081" font-size="20.8" textLength="74" lengthAdjust="spacingAndGlyphs">Siedlce</text>
<text x="1682" y="1084" font-size="20.8" textLength="53" lengthAdjust="spacingAndGlyphs">Biała</text>
<text x="1583" y="1189" font-size="26.4" textLength="79" lengthAdjust="spacingAndGlyphs">Lublin</text>
<text x="1442" y="1208" font-size="20.8" textLength="74" lengthAdjust="spacingAndGlyphs">Radom</text>
<text x="1679" y="1245" font-size="22.2" textLength="71" lengthAdjust="spacingAndGlyphs">Chełm</text>
<text x="1398" y="1294" font-size="20.8" textLength="60" lengthAdjust="spacingAndGlyphs">Kielce</text>
<text x="1652" y="1314" font-size="23.6" textLength="88" lengthAdjust="spacingAndGlyphs">Zamość</text>
<text x="1477" y="1339" font-size="20.8" textLength="121" lengthAdjust="spacingAndGlyphs">Tarnobrzeg</text>
<text x="1524" y="1430" font-size="19.4" textLength="98" lengthAdjust="spacingAndGlyphs">Rzeszów</text>
<text x="1604" y="1467" font-size="22.2" textLength="108" lengthAdjust="spacingAndGlyphs">Przemyśl</text>
</g>
<g font-family="Liberation Sans, sans-serif" fill="#4a4a4a" stroke="#4a4a4a" stroke-width="0.6" filter="url(#b1)">
<text x="953" y="757" font-size="20.1" textLength="86" lengthAdjust="spacingAndGlyphs">Koszalin</text>
<text x="1018" y="684" font-size="20.8" textLength="95" lengthAdjust="spacingAndGlyphs">Słupsk</text>
<text x="760" y="760" font-size="20.8" textLength="118" lengthAdjust="spacingAndGlyphs">Świnoujście</text>
<text x="790" y="874" font-size="24.2" textLength="97" lengthAdjust="spacingAndGlyphs">Szczecin</text>
<text x="1179" y="702" font-size="26.4" textLength="83" lengthAdjust="spacingAndGlyphs">Gdańsk</text>
<text x="1182" y="880" font-size="22.2" textLength="114" lengthAdjust="spacingAndGlyphs">Grudziądz</text>
<text x="1101" y="938" font-size="22.2" textLength="129" lengthAdjust="spacingAndGlyphs">Bydgoszcz</text>
<text x="1209" y="975" font-size="20.8" textLength="120" lengthAdjust="spacingAndGlyphs">Włocławek</text>
<text x="853" y="993" font-size="22.2" textLength="84" lengthAdjust="spacingAndGlyphs">Gorzów</text>
<text x="828" y="1018" font-size="19.4" textLength="134" lengthAdjust="spacingAndGlyphs">Wielkopolski</text>
<text x="1266" y="772" font-size="21.5" textLength="70" lengthAdjust="spacingAndGlyphs">Elbląg</text>
<text x="1364" y="827" font-size="20.8" textLength="78" lengthAdjust="spacingAndGlyphs">Olsztyn</text>
<text x="1590" y="734" font-size="22.2" textLength="86" lengthAdjust="spacingAndGlyphs">Suwałki</text>
<text x="1604" y="886" font-size="26.4" textLength="124" lengthAdjust="spacingAndGlyphs">Białystok</text>
<text x="1523" y="923" font-size="22.2" textLength="73" lengthAdjust="spacingAndGlyphs">Łomża</text>
<text x="1011" y="1012" font-size="26.4" textLength="95" lengthAdjust="spacingAndGlyphs">Poznań</text>
<text x="1159" y="1042" font-size="19.4" textLength="59" lengthAdjust="spacingAndGlyphs">Konin</text>
<text x="876" y="1058" font-size="20.8" textLength="77" lengthAdjust="spacingAndGlyphs">Zielona</text>
<text x="888" y="1084" font-size="22.2" textLength="53" lengthAdjust="spacingAndGlyphs">Góra</text>
<text x="984" y="1135" font-size="20.8" textLength="73" lengthAdjust="spacingAndGlyphs">Leszno</text>
<text x="1141" y="1117" font-size="20.8" textLength="60" lengthAdjust="spacingAndGlyphs">Kalisz</text>
<text x="1276" y="1116" font-size="26.4" textLength="64" lengthAdjust="spacingAndGlyphs">Łódź</text>
<text x="1226" y="1182" font-size="22.2" textLength="96" lengthAdjust="spacingAndGlyphs">Piotrków</text>
<text x="1201" y="1209" font-size="20.8" textLength="121" lengthAdjust="spacingAndGlyphs">Trybunalski</text>
<text x="935" y="1202" font-size="20.8" textLength="81" lengthAdjust="spacingAndGlyphs">Legnica</text>
<text x="1007" y="1265" font-size="26.4" textLength="113" lengthAdjust="spacingAndGlyphs">Wrocław</text>
<text x="1198" y="1273" font-size="22.2" textLength="150" lengthAdjust="spacingAndGlyphs">Częstochowa</text>
<text x="940" y="1312" font-size="20.8" textLength="103" lengthAdjust="spacingAndGlyphs">Wałbrzych</text>
<text x="1120" y="1327" font-size="22.2" textLength="64" lengthAdjust="spacingAndGlyphs">Opole</text>
<text x="1137" y="1377" font-size="22.2" textLength="114" lengthAdjust="spacingAndGlyphs">Katowice</text>
<text x="1311" y="1392" font-size="26.4" textLength="97" lengthAdjust="spacingAndGlyphs">Kraków</text>
<text x="1226" y="1464" font-size="20.8" textLength="79" lengthAdjust="spacingAndGlyphs">Bielsko-</text>
<text x="1242" y="1490" font-size="20.8" textLength="53" lengthAdjust="spacingAndGlyphs">Biała</text>
<text x="1408" y="1495" font-size="20.8" textLength="60" lengthAdjust="spacingAndGlyphs">Nowy</text>
<text x="1410" y="1521" font-size="20.8" textLength="55" lengthAdjust="spacingAndGlyphs">Sącz</text>
<text x="1302" y="1030" font-size="20.8" textLength="58" lengthAdjust="spacingAndGlyphs">Płock</text>
<text x="1396" y="1082" font-size="25.0" textLength="130" lengthAdjust="spacingAndGlyphs">Warszawa</text>
<text x="1550" y="1081" font-size="20.8" textLength="74" lengthAdjust="spacingAndGlyphs">Siedlce</text>
<text x="1682" y="1084" font-size="20.8" textLength="53" lengthAdjust="spacingAndGlyphs">Biała</text>
<text x="1583" y="1189" font-size="26.4" textLength="79" lengthAdjust="spacingAndGlyphs">Lublin</text>
<text x="1442" y="1208" font-size="20.8" textLength="74" lengthAdjust="spacingAndGlyphs">Radom</text>
<text x="1679" y="1245" font-size="22.2" textLength="71" lengthAdjust="spacingAndGlyphs">Chełm</text>
<text x="1398" y="1294" font-size="20.8" textLength="60" lengthAdjust="spacingAndGlyphs">Kielce</text>
<text x="1652" y="1314" font-size="23.6" textLength="88" lengthAdjust="spacingAndGlyphs">Zamość</text>
<text x="1477" y="1339" font-size="20.8" textLength="121" lengthAdjust="spacingAndGlyphs">Tarnobrzeg</text>
<text x="1524" y="1430" font-size="19.4" textLength="98" lengthAdjust="spacingAndGlyphs">Rzeszów</text>
<text x="1604" y="1467" font-size="22.2" textLength="108" lengthAdjust="spacingAndGlyphs">Przemyśl</text>
</g>
</g>
<polyline points="1321,697 1420,706 1500,715 1570,708 1619,703 1623,695 1638,697 1644,708 1657,708 1662,715 1682,728 1690,745 1694,783 1707,822 1724,864 1735,885 1738,905 1742,922 1745,958 1735,972 1715,982 1699,996 1689,1010 1676,1033 1677,1043 1706,1050 1722,1063 1726,1086 1722,1113 1716,1124 1720,1149 1732,1166 1732,1187 1752,1210 1764,1232 1772,1252 1785,1258 1769,1267 1778,1282 1783,1298 1783,1322 1760,1333 1742,1341 1720,1363 1700,1390 1677,1424 1660,1444 1647,1473 1651,1494 1655,1537 1672,1548 1671,1561 1645,1554 1619,1550 1603,1541 1583,1533 1577,1515 1552,1510 1536,1500 1503,1498 1481,1504 1466,1524 1438,1511 1405,1509 1384,1522 1377,1543 1347,1541 1345,1516 1330,1507 1312,1481 1301,1484 1286,1490 1284,1507 1260,1510 1243,1484 1234,1470 1221,1453 1217,1425 1186,1420 1164,1403 1160,1412 1143,1418 1130,1401 1119,1390 1130,1379 1127,1366 1101,1370 1090,1364 1077,1351 1051,1338 1043,1342 1058,1368 1056,1377 1025,1394 1014,1388 993,1355 975,1342 980,1331 999,1314 958,1303 932,1287 891,1276 880,1247 859,1241 856,1263 837,1260 856,1223 860,1201 854,1168 834,1149 834,1131 824,1107 832,1092 839,1070 837,1044 824,1031 830,997 834,979 818,967 789,941 792,922 814,903 819,878 817,862 810,808 806,768" fill="none" stroke="#ecd8e6" stroke-width="8" stroke-linejoin="round" opacity="0.6" filter="url(#b1)"/>
<polyline points="1321,697 1420,706 1500,715 1570,708 1619,703 1623,695 1638,697 1644,708 1657,708 1662,715 1682,728 1690,745 1694,783 1707,822 1724,864 1735,885 1738,905 1742,922 1745,958 1735,972 1715,982 1699,996 1689,1010 1676,1033 1677,1043 1706,1050 1722,1063 1726,1086 1722,1113 1716,1124 1720,1149 1732,1166 1732,1187 1752,1210 1764,1232 1772,1252 1785,1258 1769,1267 1778,1282 1783,1298 1783,1322 1760,1333 1742,1341 1720,1363 1700,1390 1677,1424 1660,1444 1647,1473 1651,1494 1655,1537 1672,1548 1671,1561 1645,1554 1619,1550 1603,1541 1583,1533 1577,1515 1552,1510 1536,1500 1503,1498 1481,1504 1466,1524 1438,1511 1405,1509 1384,1522 1377,1543 1347,1541 1345,1516 1330,1507 1312,1481 1301,1484 1286,1490 1284,1507 1260,1510 1243,1484 1234,1470 1221,1453 1217,1425 1186,1420 1164,1403 1160,1412 1143,1418 1130,1401 1119,1390 1130,1379 1127,1366 1101,1370 1090,1364 1077,1351 1051,1338 1043,1342 1058,1368 1056,1377 1025,1394 1014,1388 993,1355 975,1342 980,1331 999,1314 958,1303 932,1287 891,1276 880,1247 859,1241 856,1263 837,1260 856,1223 860,1201 854,1168 834,1149 834,1131 824,1107 832,1092 839,1070 837,1044 824,1031 830,997 834,979 818,967 789,941 792,922 814,903 819,878 817,862 810,808 806,768" fill="none" stroke="#a9a5ae" stroke-width="2.8" stroke-linejoin="round" filter="url(#b1)"/>
<polyline points="806,768 837,755 891,742 945,729 993,720 1007,706 1026,679 1042,671 1070,667 1080,660 1112,646 1160,636 1198,635 1205,643 1214,660 1221,667 1232,698 1236,713 1260,712 1287,707 1300,704 1321,697" fill="none" stroke="#b9b7c0" stroke-width="2" stroke-linejoin="round" filter="url(#b1)"/>
<path d="M1198,635 Q1225,650 1247,671" fill="none" stroke="#b9b7c0" stroke-width="2.2" stroke-linecap="round" filter="url(#b1)"/>
</svg>
<!-- /MAP -->
<div id="coords" class="abs"></div>
<div class="cv" style="left:6px;top:1882px;">6' 42.5''</div>
<div class="cl" style="left:175px;top:1882px;">E:</div>
<div class="cv" style="left:210px;top:1882px;">29° 18' 38.68''</div>
<div class="cv" style="left:-14px;top:1928px;">2029.73</div>
<div class="cl" style="left:175px;top:1928px;">Y:</div>
<div class="cv" style="left:211px;top:1928px;">1204915.18</div>
</body></html>
